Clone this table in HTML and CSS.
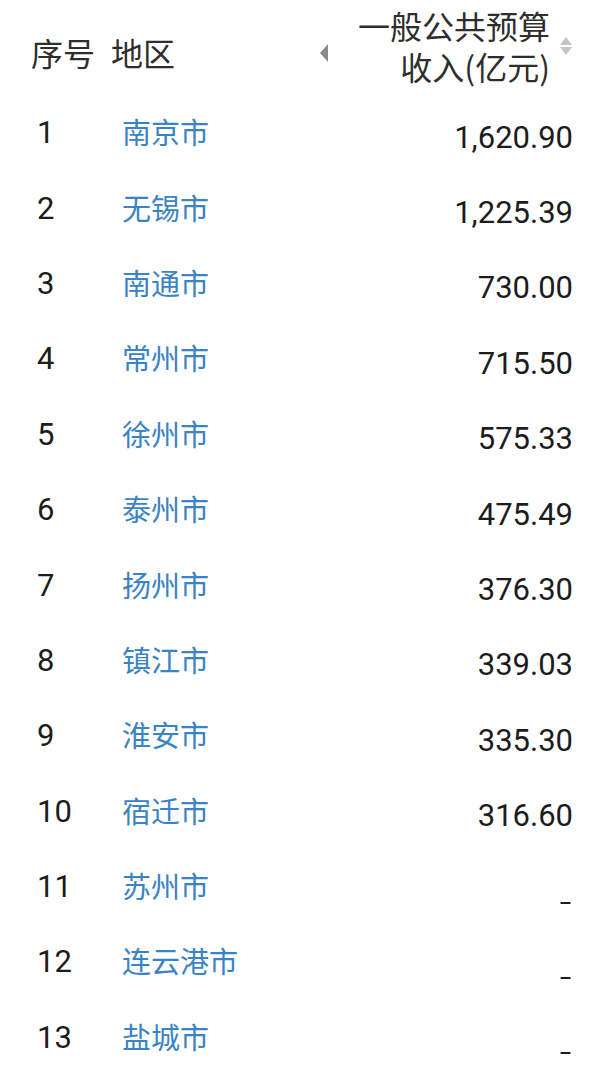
FILE: index.html
```html
<!DOCTYPE html>
<html lang="zh">
<head>
<meta charset="utf-8">
<link rel="stylesheet" href="styles.css">
</head>
<body>
<div class="table">
  <div class="head">
    <div class="h-idx">序号</div>
    <div class="h-area">地区</div>
    <div class="h-val">
      <span class="arrow-left"></span>
      <span class="h-title"><span class="h-line">一般公共预算</span><span class="h-line">收入(亿元)</span></span>
      <span class="sorter"><span class="up"></span><span class="down"></span></span>
    </div>
  </div>
  <div class="row"><span class="idx">1</span><span class="city">南京市</span><span class="val">1,620.90</span></div>
  <div class="row"><span class="idx">2</span><span class="city">无锡市</span><span class="val">1,225.39</span></div>
  <div class="row"><span class="idx">3</span><span class="city">南通市</span><span class="val">730.00</span></div>
  <div class="row"><span class="idx">4</span><span class="city">常州市</span><span class="val">715.50</span></div>
  <div class="row"><span class="idx">5</span><span class="city">徐州市</span><span class="val">575.33</span></div>
  <div class="row"><span class="idx">6</span><span class="city">泰州市</span><span class="val">475.49</span></div>
  <div class="row"><span class="idx">7</span><span class="city">扬州市</span><span class="val">376.30</span></div>
  <div class="row"><span class="idx">8</span><span class="city">镇江市</span><span class="val">339.03</span></div>
  <div class="row"><span class="idx">9</span><span class="city">淮安市</span><span class="val">335.30</span></div>
  <div class="row"><span class="idx">10</span><span class="city">宿迁市</span><span class="val">316.60</span></div>
  <div class="row"><span class="idx">11</span><span class="city">苏州市</span><span class="val dash"><span class="dash-mark">-</span></span></div>
  <div class="row"><span class="idx">12</span><span class="city">连云港市</span><span class="val dash"><span class="dash-mark">-</span></span></div>
  <div class="row"><span class="idx">13</span><span class="city">盐城市</span><span class="val dash"><span class="dash-mark">-</span></span></div>
</div>
</body>
</html>
```

FILE: styles.css
```css
html, body {
  margin: 0;
  padding: 0;
  background: #ffffff;
}
body {
  font-family: Roboto, "Noto Sans CJK SC", sans-serif;
  color: #1c1c1c;
}
.table {
  width: 600px;
}
.head {
  display: flex;
  align-items: center;
  height: 95px;
  font-family: "Noto Sans CJK SC", sans-serif;
  font-size: 32px;
  color: #2e2e2e;
}
.h-idx {
  width: 80px;
  padding-left: 31px;
  margin-top: 9px;
  line-height: 40px;
}
.h-area {
  width: 100px;
  margin-top: 9px;
  line-height: 40px;
}
.h-val {
  flex: 1;
  display: flex;
  align-items: center;
  justify-content: flex-end;
  padding-right: 28px;
  margin-top: -4px;
}
.arrow-left {
  width: 0;
  height: 0;
  border-top: 9px solid transparent;
  border-bottom: 9px solid transparent;
  border-right: 8px solid #8a8a8a;
  margin-right: 30px;
  margin-top: 15px;
}
.h-title {
  display: flex;
  flex-direction: column;
  align-items: flex-end;
}
.h-line {
  display: block;
  height: 41px;
  line-height: 41px;
  overflow: visible;
}
.sorter {
  display: flex;
  flex-direction: column;
  gap: 2px;
  margin-left: 10px;
  margin-top: 0;
}
.sorter .up {
  width: 0;
  height: 0;
  border-left: 6px solid transparent;
  border-right: 6px solid transparent;
  border-bottom: 8px solid #c4c4c4;
}
.sorter .down {
  width: 0;
  height: 0;
  border-left: 6px solid transparent;
  border-right: 6px solid transparent;
  border-top: 8px solid #c4c4c4;
}
.row {
  display: flex;
  align-items: center;
  height: 75.4px;
}
.idx {
  width: 85px;
  padding-left: 37px;
  font-size: 31px;
  color: #1c1c1c;
}
.city {
  width: 200px;
  font-family: "Noto Sans CJK SC", sans-serif;
  font-size: 29px;
  color: #3a83c4;
  margin-top: -3px;
}
.val {
  flex: 1;
  text-align: right;
  padding-right: 27px;
  font-size: 31px;
  color: #1c1c1c;
  margin-top: 9px;
}
.val.dash {
  margin-top: 30px;
  padding-right: 29px;
  font-size: 26px;
}
.dash-mark {
  display: inline-block;
  transform: scaleX(1.6);
  transform-origin: right center;
}
```
